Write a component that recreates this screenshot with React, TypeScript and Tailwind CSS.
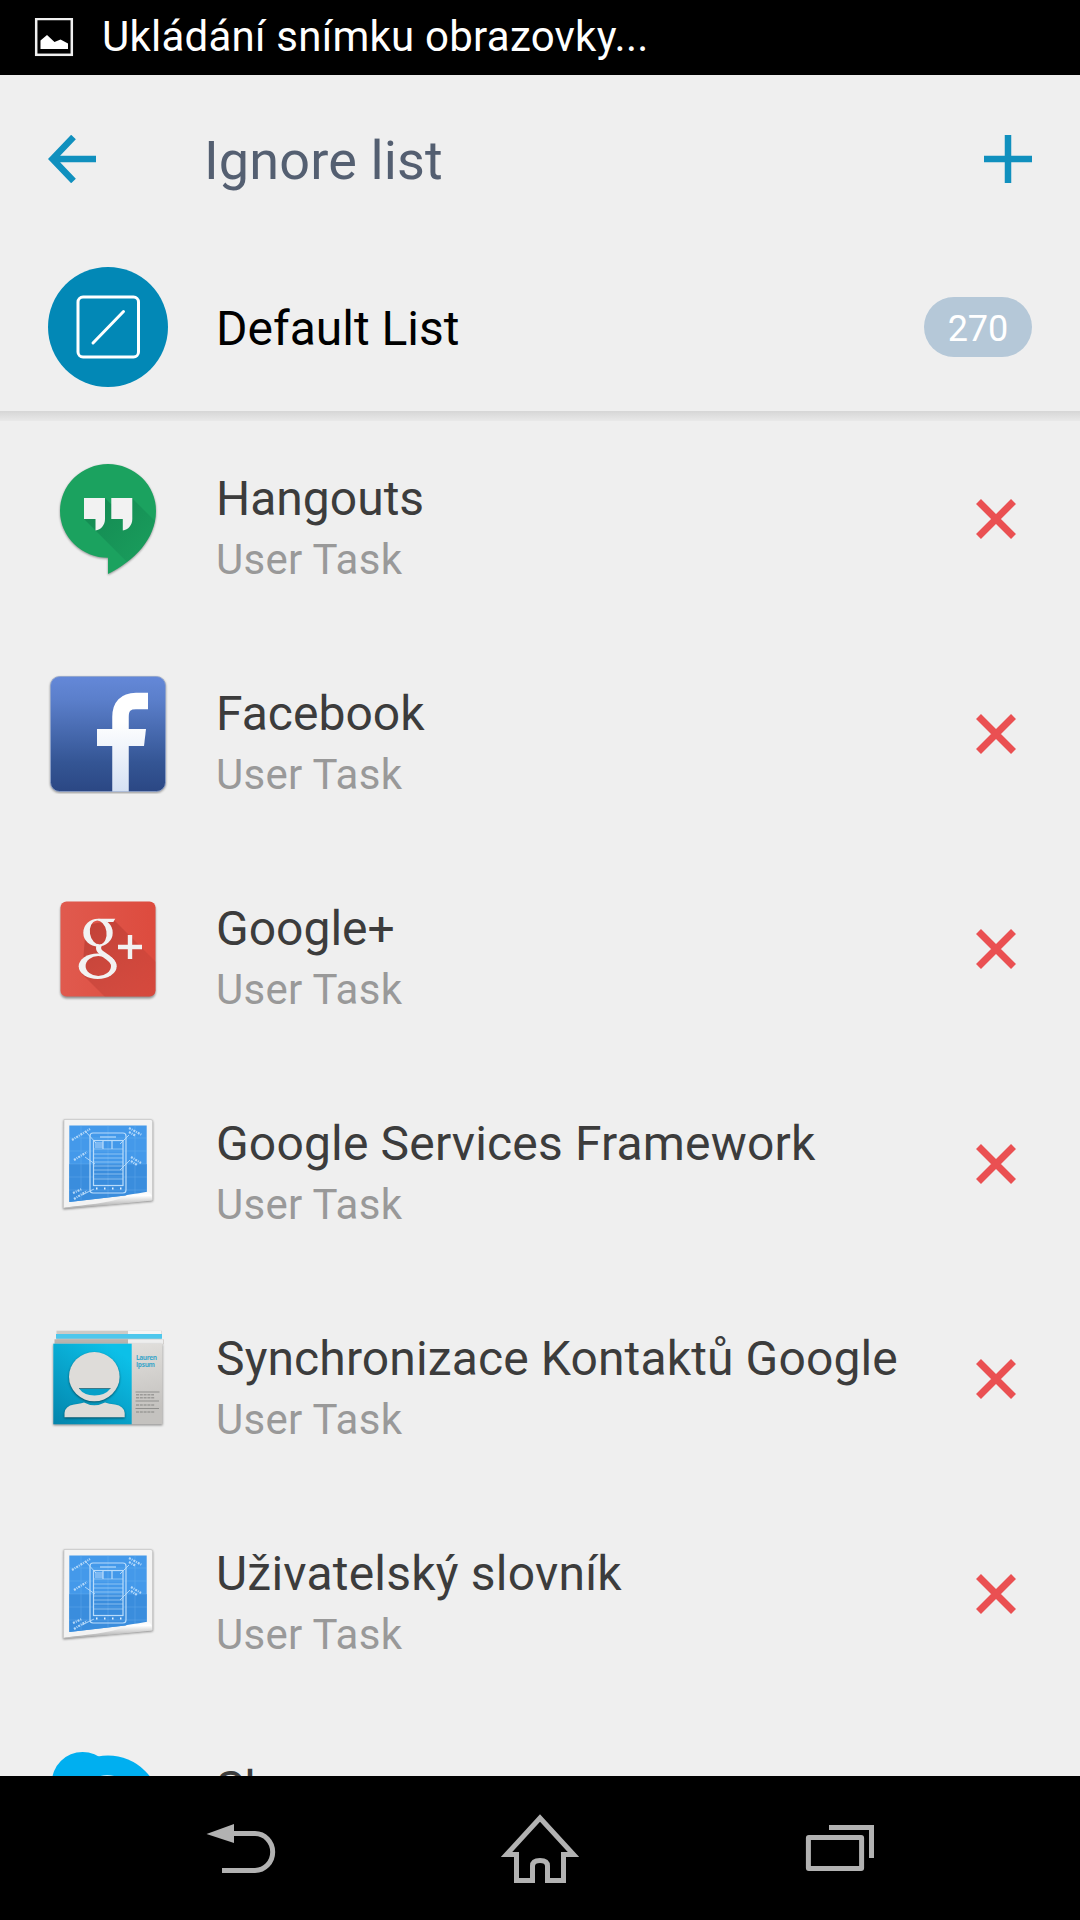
import type { ReactNode } from "react"

function HangoutsIcon() {
  return (
    <svg viewBox="0 0 120 120" className="size-[120px]">
      <defs>
        <clipPath id="bubble">
          <path d="M60 98.7A48 46.8 0 1 1 108 52C108 80 86 102 60 115Z" />
        </clipPath>
        <linearGradient id="hangoutsFade" x1="0" y1="0" x2="1" y2="1">
          <stop offset="0.1" stopColor="#0b6b42" stopOpacity="0.4" />
          <stop offset="0.65" stopColor="#0b6b42" stopOpacity="0.04" />
        </linearGradient>
      </defs>
      <path
        d="M60 98.7A48 46.8 0 1 1 108 52C108 80 86 102 60 115Z"
        fill="#1ba25f"
        className="drop-shadow-[0_1px_1px_rgba(0,0,0,0.4)]"
      />
      <path d="M36 60L57 39L63 45L84 39L140 95V150H126Z" fill="url(#hangoutsFade)" clipPath="url(#bubble)" />
      <path d="M36 39H57V60C57 66 53 70.8 47.5 71.5V60H36Z" fill="#f2f2f2" />
      <path d="M63.3 39H84.3V60C84.3 66 80.3 70.8 74.8 71.5V60H63.3Z" fill="#f2f2f2" />
    </svg>
  )
}

function FacebookIcon() {
  return (
    <svg viewBox="0 0 120 120" className="size-[120px]">
      <defs>
        <linearGradient id="fbBlue" x1="0" y1="0" x2="0" y2="1">
          <stop offset="0" stopColor="#6488d8" />
          <stop offset="0.2" stopColor="#5b7fcb" />
          <stop offset="0.75" stopColor="#345594" />
          <stop offset="1" stopColor="#2b4784" />
        </linearGradient>
        <linearGradient id="fbWhite" gradientUnits="userSpaceOnUse" x1="0" y1="18" x2="0" y2="118">
          <stop offset="0.3" stopColor="#ffffff" />
          <stop offset="1" stopColor="#d5e1f3" />
        </linearGradient>
      </defs>
      <rect
        x="2.5"
        y="2.5"
        width="115"
        height="115"
        rx="9"
        fill="url(#fbBlue)"
        stroke="#8fa3cc"
        strokeWidth="0.8"
        className="drop-shadow-[0_1px_1px_rgba(0,0,0,0.4)]"
      />
      <path d="M72.5 117.5V43Q72.5 27 88 27H100" fill="none" stroke="url(#fbWhite)" strokeWidth="16.5" />
      <path d="M49 55H98L96 72H49Z" fill="url(#fbWhite)" />
    </svg>
  )
}

function GooglePlusIcon() {
  return (
    <svg viewBox="0 0 120 120" className="size-[120px]">
      <defs>
        <clipPath id="gplusTile">
          <rect x="12.5" y="12.5" width="95" height="95" rx="6" />
        </clipPath>
        <linearGradient id="gplusRed" x1="0" y1="0" x2="1" y2="0">
          <stop offset="0" stopColor="#e05a4e" />
          <stop offset="1" stopColor="#dd4b3e" />
        </linearGradient>
        <linearGradient id="gplusFade" x1="0" y1="0" x2="1" y2="1">
          <stop offset="0" stopColor="#b5392f" stopOpacity="0.75" />
          <stop offset="0.75" stopColor="#c5433a" stopOpacity="0.3" />
        </linearGradient>
        <mask id="bowls">
          <rect width="120" height="120" fill="#ffffff" />
          <ellipse cx="50.2" cy="43.5" rx="8.3" ry="12" transform="rotate(-9 50.2 43.5)" fill="#000000" />
          <ellipse cx="50.3" cy="77" rx="12.7" ry="10" fill="#000000" />
        </mask>
      </defs>
      <rect
        x="12.5"
        y="12.5"
        width="95"
        height="95"
        rx="6"
        fill="url(#gplusRed)"
        className="drop-shadow-[0_2px_1px_rgba(0,0,0,0.4)]"
      />
      <path d="M34 85L38 36L66 31L82 47L130 95V130H79Z" fill="url(#gplusFade)" clipPath="url(#gplusTile)" />
      <g fill="#f2f2f2" mask="url(#bowls)">
        <ellipse cx="50" cy="43.7" rx="14.7" ry="14" />
        <ellipse cx="49.7" cy="77.2" rx="19" ry="12.8" />
        <path d="M50 29.7H67.300L65.300 33H59Z" />
      </g>
      <path d="M51.500 56C48.500 61 53 63.500 57 66.500Q63 70 65.500 75" fill="none" stroke="#f2f2f2" strokeWidth="5" />
      <path d="M82 46V70M70 58H94" stroke="#f2f2f2" strokeWidth="4.4" />
    </svg>
  )
}

function BlueprintIcon() {
  return (
    <svg viewBox="0 0 120 120" className="size-[120px]">
      <defs>
        <linearGradient id="curl" x1="0" y1="0" x2="0.12" y2="1">
          <stop offset="0" stopColor="#f5f5f5" />
          <stop offset="0.35" stopColor="#ffffff" />
          <stop offset="1" stopColor="#a9a9a9" />
        </linearGradient>
      </defs>
      <path
        d="M16 15.5H103Q104.5 15.5 104.5 17.5V96L15.5 104Z"
        fill="#f3f3f3"
        stroke="#c9c9c9"
        strokeWidth="0.8"
        className="drop-shadow-[0_1px_1px_rgba(0,0,0,0.45)]"
      />
      <path d="M21.3 21.5H98.7V89L21.3 98Z" fill="#4499ea" />
      <path d="M21.3 60H98.7V89L21.3 98Z" fill="#3a8ddd" />
      <path
        d="M33 21V96M60 21V93M87 21V90M21 34H99M21 47H99M21 60H99M21 73H99M21 86H99"
        stroke="#83bdf3"
        strokeWidth="0.5"
        opacity="0.5"
      />
      <g fill="none" stroke="#b9dcfb" strokeWidth="1.2">
        <rect x="42" y="29" width="36" height="60" rx="3" />
        <rect x="45.5" y="36.5" width="29.5" height="45" />
        <path d="M52 33H68" />
        <path
          d="M45.5 45H75M45.5 50H75M45.5 54H75M45.5 58H75M45.5 62H75M45.5 66H75M45.5 70H75M45.5 75H75"
          opacity="0.7"
          strokeWidth="0.9"
        />
        <path d="M55 37V45M64 37V45" />
        <path d="M38 28L48 39M81 31L72 40M37 53L47 60M82 56L72 66M34 91L46 85" strokeWidth="0.9" />
      </g>
      <rect x="47" y="38" width="8" height="6" fill="#b9dcfb" opacity="0.5" />
      <path
        d="M24 36L42 25M81 24L94 31M81 28L88 32M26 56L39 48M83 53L93 59M83 57L89 61M25 89L34 85M26 95L39 87"
        stroke="#c9e4fc"
        strokeWidth="2.2"
        strokeDasharray="2 1 1 1"
        opacity="0.85"
      />
      <path d="M48 84.5h1.5M56 84.5h1.5M64 84.5h1.5M72 84.5h1.5" stroke="#e2f1ff" strokeWidth="1.8" />
      <path d="M16 104C40 100 68 99 79 91Q92 89 101 87.5Q104.5 91 104 96.5Q60 102 16 104Z" fill="url(#curl)" />
    </svg>
  )
}

function ContactsIcon() {
  return (
    <svg viewBox="0 0 120 120" className="size-[120px]">
      <defs>
        <linearGradient id="cardBlue" x1="0.7" y1="0" x2="0" y2="1">
          <stop offset="0" stopColor="#0cc0e8" />
          <stop offset="1" stopColor="#0384ab" />
        </linearGradient>
        <linearGradient id="cardGray" x1="0" y1="0" x2="0.3" y2="1">
          <stop offset="0" stopColor="#e8e6e3" />
          <stop offset="1" stopColor="#c4c2bf" />
        </linearGradient>
      </defs>
      <rect x="8.5" y="11.7" width="105" height="10" fill="#cdcac6" />
      <rect x="80" y="11.7" width="33" height="4" fill="#f4f4f4" />
      <rect x="8" y="15" width="106" height="4.7" fill="#4ec7ec" />
      <rect x="6.5" y="20.3" width="109" height="5" fill="#b9b4af" />
      <rect x="80" y="20.3" width="35" height="5" fill="#eeeeee" />
      <rect
        x="5.3"
        y="24.7"
        width="109.2"
        height="80.6"
        fill="url(#cardGray)"
        className="drop-shadow-[0_1px_1px_rgba(0,0,0,0.45)]"
      />
      <rect x="5.3" y="24.7" width="78.4" height="80.6" fill="url(#cardBlue)" />
      <g fill="#dedcd9" className="drop-shadow-[0_1px_1px_rgba(0,0,0,0.5)]">
        <path d="M16.5 98.3V94Q17 87 26 85.5Q33 84.5 36 83.5Q46 89 57 83.5Q61 85 67 85.5Q76 87 76.7 94V98.3Z" />
        <ellipse cx="46.3" cy="57.7" rx="25.3" ry="24.6" />
      </g>
      <path d="M31 69.5H62.5Q57 76.5 46.5 76.5Q36 76.5 31 69.5Z" fill="#07a0c8" />
      <path d="M31 69.5H62.5" stroke="#3c7888" strokeWidth="1" />
      <g fontSize="6.5" fontWeight="700" fill="#3ba6c9" className="font-['Open_Sans',sans-serif]">
        <text x="88" y="41" textLength="21">
          Lauren
        </text>
        <text x="88" y="47.5" textLength="19">
          Ipsum
        </text>
      </g>
      <path d="M87.5 73H111.5M87.5 82H111M87.5 89.5H111" stroke="#8f8f8d" strokeWidth="1" />
      <path d="M88 75.8H106M88 78.8H107M88 86H107M88 93H107" stroke="#9b9a98" strokeWidth="1.4" strokeDasharray="3 0.8" />
    </svg>
  )
}

function SkypeIcon() {
  return (
    <svg viewBox="0 0 120 120" className="size-[120px]">
      <g fill="#00aff0">
        <circle cx="34.6" cy="33.8" r="30.8" />
        <circle cx="60" cy="59" r="52.5" />
        <circle cx="85.4" cy="85.4" r="30.8" />
      </g>
      <path
        d="M80 46C78 24 40 25 40 45C40 64 82 54 82 74C82 95 40 93 38 73"
        fill="none"
        stroke="#ffffff"
        strokeWidth="7"
        strokeLinecap="round"
      />
    </svg>
  )
}

const TASKS: { name: string; icon: ReactNode; tracking?: string }[] = [
  { name: "Hangouts", icon: <HangoutsIcon /> },
  { name: "Facebook", icon: <FacebookIcon /> },
  { name: "Google+", icon: <GooglePlusIcon /> },
  { name: "Google Services Framework", icon: <BlueprintIcon />, tracking: "tracking-[0.17px]" },
  { name: "Synchronizace Kontaktů Google", icon: <ContactsIcon />, tracking: "tracking-[0.13px]" },
  { name: "Uživatelský slovník", icon: <BlueprintIcon />, tracking: "tracking-[0.22px]" },
  { name: "Skype", icon: <SkypeIcon /> },
]

function StatusBar() {
  return (
    <div className="flex h-[75px] shrink-0 items-center bg-black pl-[34px] text-white">
      <svg viewBox="0 0 40 40" className="size-10">
        <rect x="2.2" y="1" width="35.6" height="35.8" fill="none" stroke="#f0f0f0" strokeWidth="2.5" />
        <path d="M6.5 31V22.5L13 17L20.5 24L26.5 21.5L34 25.5V31Z" fill="#ffffff" />
      </svg>
      <span className="-mt-0.5 ml-7 text-[42px] leading-[48px] tracking-[0.25px]">Ukládání snímku obrazovky...</span>
    </div>
  )
}

function NavBar() {
  return (
    <nav className="flex h-36 shrink-0 justify-center gap-[180px] bg-black">
      <svg viewBox="0 0 120 144" className="h-36 w-[120px]">
        <path d="M26.5 58L54 48V67Z" fill="#b2b2b2" />
        <path d="M53 57.5H75A17.7 18.5 0 0 1 75 94.5H42" fill="none" stroke="#b2b2b2" strokeWidth="5" />
      </svg>
      <svg viewBox="0 0 120 144" className="h-36 w-[120px]">
        <path
          d="M26.5 78.5H36.5V104.5H52.5V90Q52.5 84.5 60 84.5Q67.5 84.5 67.5 90V104.5H83.5V78.5H93.5L60 42Z"
          fill="none"
          stroke="#b2b2b2"
          strokeWidth="5"
        />
      </svg>
      <svg viewBox="0 0 120 144" className="h-36 w-[120px]" fill="none" stroke="#b2b2b2" strokeWidth="5">
        <rect x="28.4" y="61.5" width="53.2" height="31" rx="0.5" />
        <path d="M49 51.5H91.5V82" />
      </svg>
    </nav>
  )
}

export default function App() {
  return (
    <div className="flex h-[1920px] w-[1080px] flex-col overflow-hidden bg-[#efefef] font-[Roboto,sans-serif]">
      <StatusBar />

      <header className="flex h-[168px] shrink-0 items-center px-12 text-[#545f71]">
        <svg viewBox="0 0 48 48" className="size-12" fill="none" stroke="#1090be" strokeWidth="6.5">
          <path d="M48 24H5M25.5 2L4.5 24L25.5 46" />
        </svg>
        <h1 className="ml-[108px] pt-1 text-[54px] leading-16 tracking-[0.15px]">Ignore list</h1>
        <svg viewBox="0 0 48 48" className="ml-auto size-12" stroke="#1090be" strokeWidth="6.5">
          <path d="M24 0V48M0 24H48" />
        </svg>
      </header>

      <section className="flex h-[168px] shrink-0 items-center px-12">
        <svg viewBox="0 0 120 120" className="size-[120px]" fill="none" stroke="#ffffff">
          <circle cx="60" cy="60" r="60" fill="#0288b6" stroke="none" />
          <rect x="30" y="30" width="60.5" height="60" rx="5" strokeWidth="3" />
          <path d="M45 76L75.5 44.5" strokeWidth="3" strokeLinecap="round" />
        </svg>
        <h2 className="ml-12 pt-1 text-[48px] leading-14 text-black">Default List</h2>
        <span className="ml-auto flex h-[60px] w-[108px] items-center justify-center rounded-full bg-[#b5c8d8] pt-1 text-[36px] text-white">
          270
        </span>
      </section>

      <div className="-mb-2.5 h-2.5 shrink-0 bg-linear-to-b from-[#d6d6d6] to-[#e9e9e9]" />

      <ul className="min-h-0 flex-1 overflow-hidden">
        {TASKS.map((task) => (
          <li key={task.name} className="flex h-[215px] items-center pr-[60px] pl-12">
            {task.icon}
            <div className="ml-12 pt-[18px]">
              <p className={`text-[48px] leading-14 whitespace-nowrap text-[#3c3c3c] ${task.tracking ?? ""}`}>
                {task.name}
              </p>
              <p className="mt-[9px] text-[42px] leading-12 tracking-[0.3px] text-[#999999]">User Task</p>
            </div>
            <svg viewBox="0 0 48 48" className="ml-auto size-12" stroke="#ea5052" strokeWidth="7">
              <path d="M6.5 6.5L41.5 41.5M41.5 6.5L6.5 41.5" />
            </svg>
          </li>
        ))}
      </ul>

      <NavBar />
    </div>
  )
}
